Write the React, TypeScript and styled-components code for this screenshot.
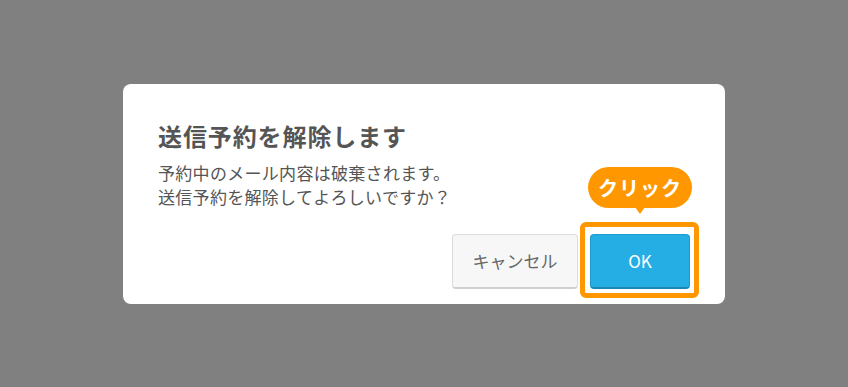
import React from "react";
import styled, { createGlobalStyle } from "styled-components";

const Global = createGlobalStyle`
  html, body { margin: 0; padding: 0; }
  body {
    background: #808080;
    font-family: "Noto Sans CJK JP", "Noto Sans", sans-serif;
  }
`;

const Overlay = styled.div`
  width: 848px;
  height: 387px;
  background: #808080;
  display: flex;
  align-items: center;
  justify-content: center;
`;

const Dialog = styled.div`
  box-sizing: border-box;
  width: 602px;
  height: 220px;
  background: #fff;
  border-radius: 8px;
  padding: 35px 35px 15px 35px;
  display: flex;
  flex-direction: column;
`;

const Title = styled.h2`
  margin: 0;
  font-size: 24px;
  line-height: 34px;
  font-weight: 700;
  letter-spacing: 0.9px;
  color: #555;
`;

const Body = styled.p`
  margin: 8px 0 0 0;
  font-size: 17px;
  line-height: 24px;
  letter-spacing: 0.3px;
  color: #555;
`;

const Footer = styled.div`
  margin-top: 25px;
  display: flex;
  justify-content: flex-end;
  gap: 12px;
`;

const Button = styled.button<{ $primary?: boolean; $w: number }>`
  box-sizing: border-box;
  width: ${(p) => p.$w}px;
  height: 55px;
  border-radius: 4px;
  font-family: "Noto Sans CJK JP", "Noto Sans", sans-serif;
  font-size: 17px;
  cursor: pointer;
  background: ${(p) => (p.$primary ? "#25aee3" : "#f7f7f7")};
  color: ${(p) => (p.$primary ? "#fff" : "#666")};
  border: 1px solid ${(p) => (p.$primary ? "#1f9ccd" : "#dcdcdc")};
  border-bottom: 2px solid ${(p) => (p.$primary ? "#1a86b3" : "#cfcfcf")};
  padding: 0;
`;

const Highlighted = styled.div`
  position: relative;
  display: flex;
`;

const Ring = styled.div`
  position: absolute;
  left: -10px;
  top: -12px;
  right: -9px;
  bottom: -9px;
  border: 5px solid #ff9800;
  border-radius: 6px;
  pointer-events: none;
`;

const Bubble = styled.div`
  position: absolute;
  left: -2px;
  top: -67px;
  width: 104px;
  height: 41px;
  border-radius: 21px;
  background: #ff9800;
  color: #fff;
  font-size: 20px;
  font-weight: 700;
  letter-spacing: 1px;
  display: flex;
  align-items: center;
  justify-content: center;
  &::after {
    content: "";
    position: absolute;
    left: 50%;
    bottom: -6px;
    margin-left: -5px;
    border-left: 5px solid transparent;
    border-right: 5px solid transparent;
    border-top: 7px solid #ff9800;
  }
`;

export default function App() {
  return (
    <>
      <Global />
      <Overlay>
        <Dialog>
          <Title>送信予約を解除します</Title>
          <Body>
            予約中のメール内容は破棄されます。
            <br />
            送信予約を解除してよろしいですか？
          </Body>
          <Footer>
            <Button $w={126}>キャンセル</Button>
            <Highlighted>
              <Button $primary $w={100}>OK</Button>
              <Ring />
              <Bubble>クリック</Bubble>
            </Highlighted>
          </Footer>
        </Dialog>
      </Overlay>
    </>
  );
}
